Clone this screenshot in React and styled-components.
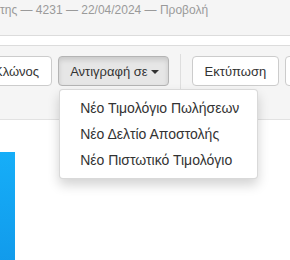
import React from "react";
import styled, { createGlobalStyle } from "styled-components";

const Global = createGlobalStyle`
  html, body { margin: 0; padding: 0; background: #fff; }
  body { font-family: "Liberation Sans", Arial, sans-serif; overflow: hidden; }
  * { box-sizing: border-box; }
`;

const Page = styled.div`
  width: 290px;
  height: 260px;
  overflow: hidden;
  display: flex;
  flex-direction: column;
  background: #fff;
`;

const Header = styled.div`
  height: 36px;
  background: #f5f5f5;
  border-bottom: 1px solid #dcdcdc;
  padding-top: 2px;
  flex-shrink: 0;
`;

const Title = styled.div`
  margin-left: 0;
  font-size: 12px;
  line-height: 16px;
  color: #9a9a9a;
  white-space: nowrap;
`;

const Spacer = styled.div`
  height: 9px;
  flex-shrink: 0;
`;

const Toolbar = styled.div`
  height: 75px;
  flex-shrink: 0;
  background: #f5f5f5;
  border-top: 1px solid #dcdcdc;
  border-bottom: 1px solid #e2e2e2;
  display: flex;
  align-items: flex-start;
  padding-top: 10px;
  gap: 6px;
  white-space: nowrap;
`;

const Button = styled.button`
  height: 30px;
  padding: 0 ${(p) => (p.$active ? "9px 0 11px" : "12px")};
  font-family: "Liberation Sans", Arial, sans-serif;
  font-size: 13px;
  color: #333;
  background: ${(p) => (p.$active ? "#e6e6e6" : "#fff")};
  border: 1px solid ${(p) => (p.$active ? "#b4b4b4" : "#ccc")};
  border-radius: 4px;
  box-shadow: ${(p) => (p.$active ? "inset 0 3px 5px rgba(0,0,0,0.125)" : "none")};
  display: inline-flex;
  align-items: center;
  gap: 3px;
  flex-shrink: 0;
  margin-left: ${(p) => p.$offset || 0}px;
`;

const Caret = styled.span`
  display: inline-block;
  width: 0;
  height: 0;
  border-left: 4px solid transparent;
  border-right: 4px solid transparent;
  border-top: 4px solid #333;
  margin-top: 1px;
`;

const Group = styled.div`
  position: relative;
  display: flex;
  flex-shrink: 0;
`;

const Separator = styled.div`
  width: 1px;
  height: 58px;
  margin: -2px 5px 0 5px;
  background: #dedede;
  flex-shrink: 0;
`;

const Menu = styled.ul`
  position: absolute;
  top: 100%;
  left: 1px;
  margin: 3px 0 0;
  padding: 5px 0;
  list-style: none;
  width: 199px;
  background: #fff;
  border: 1px solid rgba(0, 0, 0, 0.15);
  border-radius: 4px;
  box-shadow: 0 6px 12px rgba(0, 0, 0, 0.175);
  z-index: 10;
`;

const MenuItem = styled.li`
  padding: 3px 20px;
  font-size: 14px;
  line-height: 20px;
  color: #333;
  white-space: nowrap;
`;

const Content = styled.div`
  flex: 1;
  padding-top: 32px;
  display: flex;
`;

const BlueBar = styled.div`
  width: 15px;
  height: 120px;
  background: linear-gradient(180deg, #16aef8 0%, #1199ea 100%);
`;

export default function App() {
  return (
    <Page>
      <Global />
      <Header>
        <Title>της — 4231 — 22/04/2024 — Προβολή</Title>
      </Header>
      <Spacer />
      <Toolbar>
        <Button $offset={-19}>Κλώνος</Button>
        <Group>
          <Button $active>
            Αντιγραφή σε<Caret />
          </Button>
          <Menu>
            <MenuItem>Νέο Τιμολόγιο Πωλήσεων</MenuItem>
            <MenuItem>Νέο Δελτίο Αποστολής</MenuItem>
            <MenuItem>Νέο Πιστωτικό Τιμολόγιο</MenuItem>
          </Menu>
        </Group>
        <Separator />
        <Button>Εκτύπωση</Button>
        <Button>Email</Button>
      </Toolbar>
      <Content>
        <BlueBar />
      </Content>
    </Page>
  );
}
